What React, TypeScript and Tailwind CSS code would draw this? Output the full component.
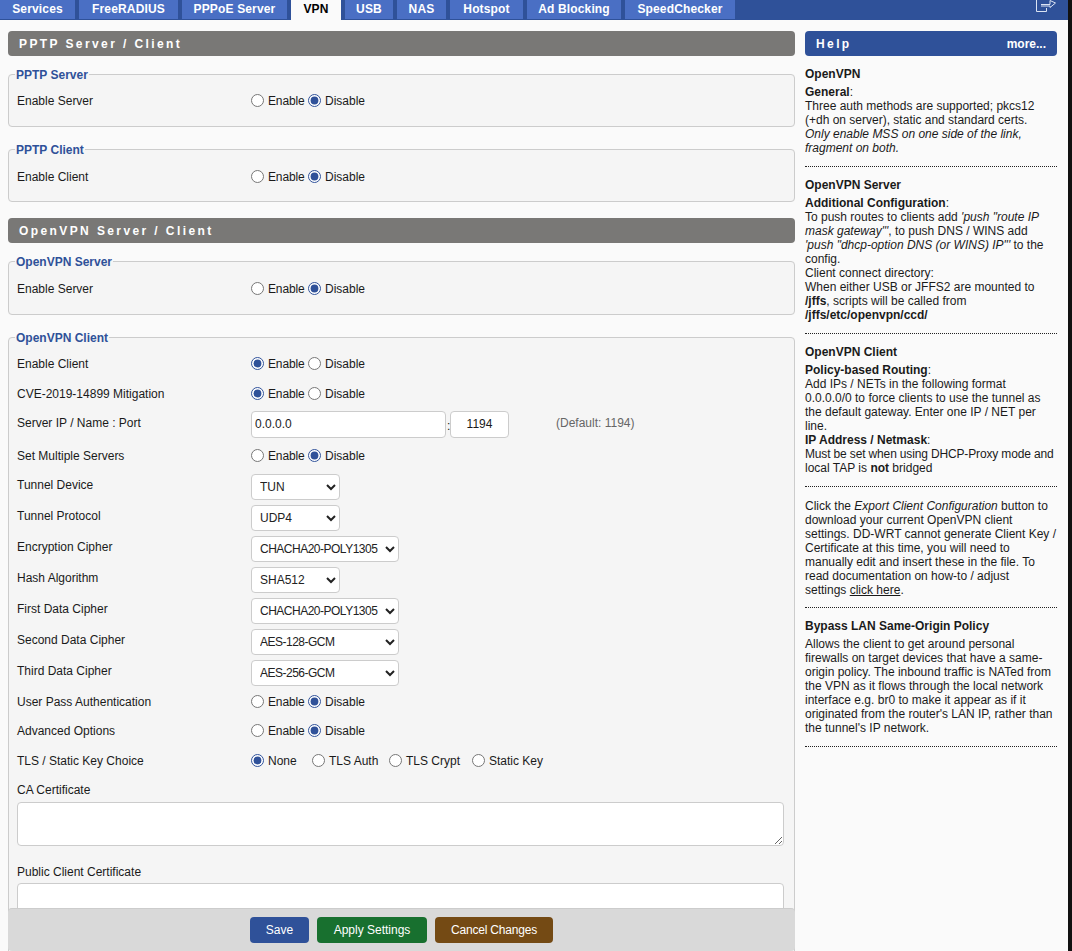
import React from "react";

const FONT = "font-['Tahoma','Liberation_Sans',sans-serif]";

const tabs = [
  { label: "Services", w: "w-[75px]" },
  { label: "FreeRADIUS", w: "w-[99px]" },
  { label: "PPPoE Server", w: "w-[105px]" },
  { label: "VPN", w: "w-[50px]", active: true },
  { label: "USB", w: "w-[48px]" },
  { label: "NAS", w: "w-[49px]" },
  { label: "Hotspot", w: "w-[73px]" },
  { label: "Ad Blocking", w: "w-[94px]" },
  { label: "SpeedChecker", w: "w-[110px]" },
];

const SectionHeader = ({ title }: { title: string }) => (
  <div className="flex h-[25px] items-center rounded-[4px] bg-[#797876] pl-[11px] text-[12px] font-bold tracking-[2.4px] text-white">{title}</div>
);

const Radio = ({ name, checked }: { name: string; checked?: boolean }) => (
  <input type="radio" name={name} defaultChecked={checked} className="h-[13px] w-[13px] -translate-y-px accent-[#2f5199]" />
);

const RadioPair = ({ name, enabled }: { name: string; enabled: boolean }) => (
  <div className="flex items-center">
    <Radio name={name} checked={enabled} />
    <span className="ml-[4px] w-[40px] tracking-[-0.15px]">Enable</span>
    <Radio name={name} checked={!enabled} />
    <span className="ml-[4px]">Disable</span>
  </div>
);

const Row = ({ label, h, lift, children }: { label: string; h: string; lift?: string; children: React.ReactNode }) => (
  <div className={`flex items-center ${h}`}>
    <div className={`w-[234px] shrink-0 ${lift ?? ""}`}>{label}</div>
    {children}
  </div>
);

const Group = ({ legend, className, children }: { legend: string; className?: string; children: React.ReactNode }) => (
  <fieldset className={`rounded-[4px] border border-[#cccccc] bg-[#f5f5f5] pl-[8px] ${className ?? ""}`}>
    <legend className="-ml-[2px] px-[1px] text-[12px] font-bold leading-[14px] text-[#2f5199]">
      <span className="block translate-y-px">{legend}</span>
    </legend>
    {children}
  </fieldset>
);

const Select = ({ value, wide }: { value: string; wide?: boolean }) => (
  <select
    defaultValue={value}
    className={`h-[26px] rounded-[4px] border border-[#cccccc] bg-white pl-[4px] text-[12px] text-[#222222] ${wide ? "w-[148px] tracking-[-0.5px]" : "w-[89px]"}`}
  >
    <option>{value}</option>
  </select>
);

const HelpRule = ({ className }: { className?: string }) => (
  <div className={`border-b border-dotted border-[#222222] ${className ?? "mt-[11px]"}`} />
);

export default function App() {
  return (
    <div className="h-[951px] w-[1072px] overflow-hidden bg-[#111111]">
      <div className={`relative h-[951px] w-[1068px] overflow-hidden bg-[#fafafa] text-[12px] leading-[14px] text-[#1a1a1a] ${FONT}`}>
        {/* tab bar */}
        <div className="flex h-[20px] items-start justify-between bg-[#2f5199]">
          <div className="flex h-full gap-[4px]">
            {tabs.map(tab => (
              <div
                key={tab.label}
                className={`flex items-start justify-center pt-[2px] text-[12px] font-bold tracking-[0.15px] ${tab.w} ${
                  tab.active ? "h-[20px] bg-[#fafafa] text-black" : "h-[19px] bg-[#4a6fc4] text-white"
                }`}
              >
                {tab.label}
              </div>
            ))}
          </div>
          <svg width="22" height="13" viewBox="0 0 22 13" fill="none" stroke="#dbe3f3" strokeWidth="1" className="mr-[11px]">
            <path d="M1.5 0v11.5h10V8" />
            <path d="M6 5.5h9V1.5L20.5 4 15 8.5V7H6" transform="translate(0 -1)" />
          </svg>
        </div>

        <div className="flex gap-[10px] pl-[8px] pt-[11px]">
          {/* main column */}
          <div className="w-[787px] shrink-0">
            <SectionHeader title="PPTP Server / Client" />
            <Group legend="PPTP Server" className="mt-[11px] h-[60px]">
              <Row label="Enable Server" h="h-[24px] mt-[8px]">
                <RadioPair name="pptp-server" enabled={false} />
              </Row>
            </Group>
            <Group legend="PPTP Client" className="mt-[15px] h-[60px]">
              <Row label="Enable Client" h="h-[24px] mt-[9px]">
                <RadioPair name="pptp-client" enabled={false} />
              </Row>
            </Group>
            <div className="mt-[16px]">
              <SectionHeader title="OpenVPN Server / Client" />
            </div>
            <Group legend="OpenVPN Server" className="mt-[11px] h-[61px]">
              <Row label="Enable Server" h="h-[24px] mt-[9px]">
                <RadioPair name="ovpn-server" enabled={false} />
              </Row>
            </Group>
            <Group legend="OpenVPN Client" className="mt-[15px] h-[700px] pr-[10px]">
              <Row label="Enable Client" h="h-[30px] mt-[5px]">
                <RadioPair name="ovpn-client" enabled={true} />
              </Row>
              <Row label="CVE-2019-14899 Mitigation" h="h-[30px]">
                <RadioPair name="ovpn-cve" enabled={true} />
              </Row>
              <Row label="Server IP / Name : Port" h="h-[30px]" lift="-translate-y-px">
                <input readOnly value="0.0.0.0" className="h-[27px] w-[195px] rounded-[4px] border border-[#cccccc] bg-white pl-[3px] text-[12px]" />
                <span className="mx-[1px] w-[2px] translate-y-[2px]">:</span>
                <input readOnly value="1194" className="h-[27px] w-[59px] rounded-[4px] border border-[#cccccc] bg-white text-center text-[12px]" />
                <span className="ml-[47px] -translate-y-px text-[#666666]">(Default: 1194)</span>
              </Row>
              <Row label="Set Multiple Servers" h="h-[30px] mt-[2px]">
                <RadioPair name="ovpn-multi" enabled={false} />
              </Row>
              <Row label="Tunnel Device" h="h-[31px]" lift="-translate-y-[2px]"><Select value="TUN" /></Row>
              <Row label="Tunnel Protocol" h="h-[31px]" lift="-translate-y-[2px]"><Select value="UDP4" /></Row>
              <Row label="Encryption Cipher" h="h-[31px]" lift="-translate-y-[2px]"><Select value="CHACHA20-POLY1305" wide /></Row>
              <Row label="Hash Algorithm" h="h-[31px]" lift="-translate-y-[2px]"><Select value="SHA512" /></Row>
              <Row label="First Data Cipher" h="h-[31px]" lift="-translate-y-[2px]"><Select value="CHACHA20-POLY1305" wide /></Row>
              <Row label="Second Data Cipher" h="h-[31px]" lift="-translate-y-[2px]"><Select value="AES-128-GCM" wide /></Row>
              <Row label="Third Data Cipher" h="h-[31px]" lift="-translate-y-[2px]"><Select value="AES-256-GCM" wide /></Row>
              <Row label="User Pass Authentication" h="h-[28px]">
                <RadioPair name="ovpn-userpass" enabled={false} />
              </Row>
              <Row label="Advanced Options" h="h-[30px]">
                <RadioPair name="ovpn-adv" enabled={false} />
              </Row>
              <Row label="TLS / Static Key Choice" h="h-[30px]">
                <div className="flex items-center">
                  <Radio name="ovpn-tls" checked />
                  <span className="ml-[4px] w-[44px]">None</span>
                  <Radio name="ovpn-tls" />
                  <span className="ml-[4px] w-[60px]">TLS Auth</span>
                  <Radio name="ovpn-tls" />
                  <span className="ml-[4px] w-[66px]">TLS Crypt</span>
                  <Radio name="ovpn-tls" />
                  <span className="ml-[4px]">Static Key</span>
                </div>
              </Row>
              <div className="mt-[6px] leading-[16px]">CA Certificate</div>
              <textarea readOnly className="mt-[4px] block h-[44px] w-full rounded-[4px] border border-[#cccccc] bg-white" />
              <div className="mt-[18px] leading-[16px]">Public Client Certificate</div>
              <textarea readOnly className="mt-[3px] block h-[44px] w-full rounded-[4px] border border-[#cccccc] bg-white" />
            </Group>
          </div>

          {/* help column */}
          <div className="w-[252px] shrink-0">
            <div className="flex h-[25px] items-center justify-between rounded-[4px] bg-[#2f5199] px-[11px] font-bold text-white">
              <span className="tracking-[2.4px]">Help</span>
              <span>more...</span>
            </div>
            <div className="mt-[11px] font-bold">OpenVPN</div>
            <div className="mt-[4px]"><b>General</b>:</div>
            <div>
              Three auth methods are supported; pkcs12<br />
              (+dh on server), static and standard certs.<br />
              <i>Only enable MSS on one side of the link,<br />fragment on both.</i>
            </div>
            <HelpRule />
            <div className="mt-[11px] font-bold">OpenVPN Server</div>
            <div className="mt-[4px]"><b>Additional Configuration</b>:</div>
            <div>
              To push routes to clients add <i>'push "route IP<br />mask gateway"'</i>, to push DNS / WINS add<br />
              <i>'push "dhcp-option DNS (or WINS) IP"'</i> to the<br />config.
            </div>
            <div>Client connect directory:</div>
            <div>
              When either USB or JFFS2 are mounted to<br /><b>/jffs</b>, scripts will be called from<br /><b>/jffs/etc/openvpn/ccd/</b>
            </div>
            <HelpRule />
            <div className="mt-[11px] font-bold">OpenVPN Client</div>
            <div className="mt-[4px]"><b>Policy-based Routing</b>:</div>
            <div>
              Add IPs / NETs in the following format<br />0.0.0.0/0 to force clients to use the tunnel as<br />the default gateway. Enter one IP / NET per<br />line.
            </div>
            <div><b>IP Address / Netmask</b>:</div>
            <div className="whitespace-nowrap tracking-[-0.15px]">Must be set when using DHCP-Proxy mode and</div>
            <div>local TAP is <b>not</b> bridged</div>
            <HelpRule />
            <div className="mt-[12px]">
              Click the <i>Export Client Configuration</i> button to<br />
              download your current OpenVPN client<br />
              settings. DD-WRT cannot generate Client Key /<br />
              Certificate at this time, you will need to<br />
              manually edit and insert these in the file. To<br />
              read documentation on how-to / adjust<br />
              settings <u>click here</u>.
            </div>
            <HelpRule className="mt-[10px]" />
            <div className="mt-[11px] font-bold">Bypass LAN Same-Origin Policy</div>
            <div className="mt-[4px]">
              Allows the client to get around personal<br />
              firewalls on target devices that have a same-<br />
              origin policy. The inbound traffic is NATed from<br />
              the VPN as it flows through the local network<br />
              interface e.g. br0 to make it appear as if it<br />
              originated from the router's LAN IP, rather than<br />
              the tunnel's IP network.
            </div>
            <HelpRule />
          </div>
        </div>

        {/* sticky save bar over the form */}
        <div className="absolute bottom-0 left-[8px] flex h-[43px] w-[787px] items-center justify-center gap-[8px] rounded-[4px] border-t border-[#cccccc] bg-[#d9d9d9] text-white">
          <div className="flex h-[26px] w-[59px] items-center justify-center rounded-[4px] bg-[#2f5199]">Save</div>
          <div className="flex h-[26px] w-[110px] items-center justify-center rounded-[4px] bg-[#18702f]">Apply Settings</div>
          <div className="flex h-[26px] w-[118px] items-center justify-center rounded-[4px] bg-[#744a14] tracking-[-0.2px]">Cancel Changes</div>
        </div>
      </div>
    </div>
  );
}
